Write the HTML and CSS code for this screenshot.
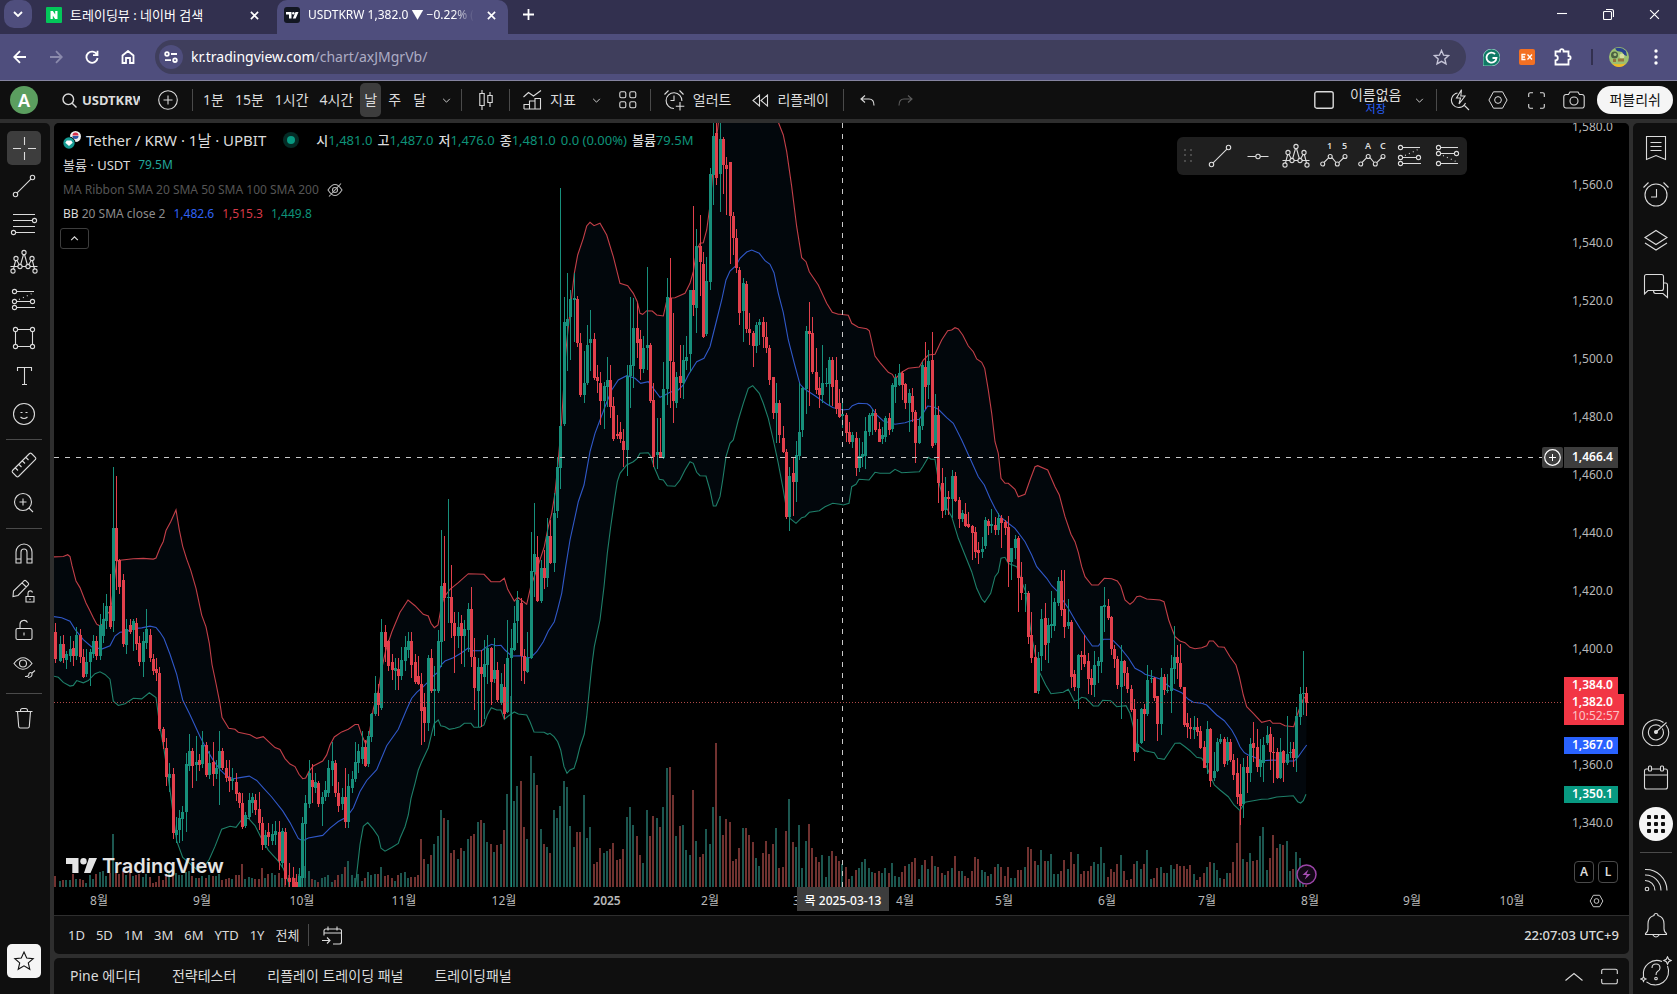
FILE: index.html
```
<!DOCTYPE html>
<html lang="ko">
<head>
<meta charset="utf-8">
<title>USDTKRW 1,382.0 ▼ −0.22%</title>
<link rel="stylesheet" href="styles.css">
</head>
<body>
<svg class="sprite" aria-hidden="true">
  <symbol id="i-trend" viewBox="0 0 28 28"><path d="M7.1 20.9 20.9 7.1"/><circle cx="5.5" cy="22.5" r="2.2"/><circle cx="22.5" cy="5.5" r="2.2"/></symbol>
  <symbol id="i-xabcd" viewBox="0 0 28 28"><path d="M.5 18.5H8M12 18.5h4M20 18.5h7.5M3.5 21 5.600 12.500M6.800 12.500 9.300 16.500M10.700 16.500 13.500 6.500M14.500 6.500 17.300 16.500M18.700 16.500 21.200 12.500M22.400 12.500 24.500 21"/><circle cx="3" cy="23" r="2.100"/><circle cx="6" cy="10.500" r="2.100"/><circle cx="10" cy="18.500" r="2.100"/><circle cx="14" cy="4.500" r="2.100"/><circle cx="18" cy="18.500" r="2.100"/><circle cx="22" cy="10.500" r="2.100"/><circle cx="25" cy="23" r="2.100"/></symbol>
  <symbol id="i-forecast" viewBox="0 0 28 28"><path d="M6.700 5.500H24M6.700 15.500h13.600M6.700 21.500H25"/><path d="M9 13.500 23 7" stroke-dasharray="1 3.300"/><circle cx="4.500" cy="5.500" r="2.100"/><circle cx="4.500" cy="15.500" r="2.100"/><circle cx="22.500" cy="15.500" r="2.100"/><circle cx="4.500" cy="21.500" r="2.100"/></symbol>
  <symbol id="i-forecast-down" viewBox="0 0 28 28"><path d="M6.700 5.500H24M6.700 11.500h13.600M6.700 21.500H24"/><path d="M9 13.500 23 20" stroke-dasharray="1 3.300"/><circle cx="4.500" cy="5.500" r="2.100"/><circle cx="4.500" cy="11.500" r="2.100"/><circle cx="22.500" cy="11.500" r="2.100"/><circle cx="4.500" cy="21.500" r="2.100"/></symbol>
  <symbol id="i-wave" viewBox="0 0 28 28"><path d="m4 20.500 4.500-4.700M12 15.700l4 4.800M18.700 20.700l5.300-5.200"/><circle cx="2.700" cy="22" r="2"/><circle cx="10.200" cy="14.500" r="2"/><circle cx="17.300" cy="22" r="2"/><circle cx="25" cy="14.500" r="2"/></symbol>
  <symbol id="i-chev" viewBox="0 0 10 6"><path d="m1 1 4 4 4-4"/></symbol>
  <symbol id="i-x" viewBox="0 0 10 10"><path d="m1 1 8 8M9 1 1 9"/></symbol>
  <symbol id="i-star" viewBox="0 0 22 22"><path d="m11 2 2.700 6 6.500.6-4.900 4.300 1.500 6.400L11 15.900l-5.800 3.400 1.500-6.400L1.800 8.600l6.500-.6z"/></symbol>
  <symbol id="i-hex" viewBox="0 0 22 22"><path d="M6 2h10l5 9-5 9H6L1 11z"/><circle cx="11" cy="11" r="3.700"/></symbol>
</svg>

<div class="window">
  <header class="tabs">
    <button class="tab-search" aria-label="탭 검색"><svg class="ic bold" width="10" height="6"><use href="#i-chev"/></svg></button>
    <div class="tab">
      <svg width="16" height="16" viewBox="0 0 16 16"><rect width="16" height="16" rx="1" fill="#03c75a"/><path d="M4.500 4h2.400l2.300 3.500V4h2.300v8H9.100L6.800 8.500V12H4.500z" fill="#fff"/></svg>
      <span class="tab-title ko">트레이딩뷰 : 네이버 검색</span>
      <button class="tab-close" aria-label="탭 닫기"><svg class="ic bold" width="9" height="9"><use href="#i-x"/></svg></button>
    </div>
    <div class="tab active">
      <svg width="16" height="16" viewBox="0 0 16 16"><rect width="16" height="16" rx="3" fill="#131722"/><path d="M2 5h5.500v6.500H5V7.500H2zM11.500 5H14.500l-2.800 6.500H8.800z" fill="#fff"/><circle cx="9.300" cy="6.200" r="1.200" fill="#fff"/></svg>
      <span class="tab-title fade">USDTKRW 1,382.0 ▼ −0.22% (</span>
      <button class="tab-close" aria-label="탭 닫기"><svg class="ic bold" width="9" height="9"><use href="#i-x"/></svg></button>
    </div>
    <button class="tab-new" aria-label="새 탭"><svg class="ic bold" width="11" height="11" viewBox="0 0 11 11"><path d="M5.500 0v11M0 5.500h11"/></svg></button>
    <div class="win-controls">
      <button aria-label="최소화"><svg class="ic" width="10" height="10" viewBox="0 0 10 10"><path d="M0 4.500h10"/></svg></button>
      <button aria-label="이전 크기로"><svg class="ic" width="11" height="11" viewBox="0 0 11 11"><rect x=".5" y="2.500" width="8" height="8" rx="1"/><path d="M3 .5h5.500a2 2 0 0 1 2 2V8"/></svg></button>
      <button aria-label="닫기"><svg class="ic" width="11" height="11"><use href="#i-x"/></svg></button>
    </div>
  </header>

  <nav class="omnibar">
    <button class="nav-btn" aria-label="뒤로"><svg class="ic bold" width="14" height="14" viewBox="0 0 14 14"><path d="M13 7H1.500M7 1.200 1.200 7 7 12.800"/></svg></button>
    <button class="nav-btn dim" aria-label="앞으로"><svg class="ic bold" width="14" height="14" viewBox="0 0 14 14"><path d="M1 7h11.500M7 1.200 12.800 7 7 12.800"/></svg></button>
    <button class="nav-btn" aria-label="새로고침"><svg class="ic bold" width="14" height="14" viewBox="0 0 14 14"><path d="M12 4.500A5.600 5.600 0 1 0 12.600 8M12.500.800v4.400H8"/></svg></button>
    <button class="nav-btn" aria-label="홈"><svg class="ic bold" width="14" height="14" viewBox="0 0 14 14"><path d="M1.500 13V5.500L7 1l5.500 4.500V13H9V8H5v5z"/></svg></button>
    <div class="omnibox">
      <button class="site-info" aria-label="사이트 정보"><svg class="ic bold" width="14" height="12" viewBox="0 0 14 12"><circle cx="3" cy="3" r="1.800"/><path d="M7 3h6M1 9.200h6"/><circle cx="11" cy="9.200" r="1.800"/></svg></button>
      <a class="url" href="#"><b>kr.tradingview.com</b>/chart/axJMgrVb/</a>
      <button class="bookmark" aria-label="북마크"><svg class="ic bold" width="17" height="17"><use href="#i-star"/></svg></button>
    </div>
    <div class="exts">
      <button aria-label="Grammarly"><svg width="17" height="17" viewBox="0 0 17 17"><path d="M0 8.500a8.500 8.500 0 1 1 8.500 8.500H0z" fill="#0f7a66" stroke="#cfe" stroke-width=".6"/><path d="M12 5a5 5 0 1 0 1.500 4H9.500" fill="none" stroke="#fff" stroke-width="1.800"/></svg></button>
      <button aria-label="EX"><svg width="16" height="16" viewBox="0 0 16 16"><rect width="16" height="16" rx="2" fill="#f37023"/><path d="M6.500 5.500H3v5h3.500M3 8h3M8.500 5.500l4.500 5M13 5.500l-4.500 5" fill="none" stroke="#fff" stroke-width="1.300"/></svg></button>
      <button aria-label="확장 프로그램"><svg class="ic bold" width="18" height="18" viewBox="0 0 18 18"><path d="M1.500 3.500H6V3a1.800 1.800 0 0 1 3.600 0v.5h4.900V8h.3a1.800 1.800 0 0 1 0 3.600h-.3v4.900h-13v-4.200a2.300 2.300 0 0 0 0-4.600z"/></svg></button>
      <i class="ext-sep"></i>
      <button class="profile" aria-label="프로필"><svg width="20" height="20" viewBox="0 0 20 20"><circle cx="10" cy="10" r="10" fill="#9cc070"/><path d="M6 1.500q6-2.500 11 2.500l1 5-3-1-2-3-5-1z" fill="#29418f"/><circle cx="5.500" cy="8" r="3.500" fill="#4a6140"/><circle cx="6" cy="7.500" r="1.500" fill="#a9c37f"/><circle cx="13" cy="9" r="2.500" fill="#d4de9e"/><path d="M4 12h3v3H4zM9 11.500h6v3H9z" fill="#96743d"/><path d="M3 16.500q7 1.500 14 0-3 3.500-7 3.500t-7-3.500" fill="#efb827"/></svg></button>
      <button aria-label="메뉴"><svg width="4" height="16" viewBox="0 0 4 16" fill="#fff"><circle cx="2" cy="2" r="1.700"/><circle cx="2" cy="8" r="1.700"/><circle cx="2" cy="14" r="1.700"/></svg></button>
    </div>
  </nav>

  <div class="topbar">
    <button class="avatar">A</button>
    <button class="symbol"><svg class="ic mid" width="15" height="15" viewBox="0 0 15 15"><circle cx="6.300" cy="6.300" r="5.300"/><path d="m10.200 10.200 4.300 4.300"/></svg><span>USDTKRW</span></button>
    <button class="add" aria-label="심볼 비교"><svg class="ic" width="20" height="20" viewBox="0 0 20 20"><circle cx="10" cy="10" r="9.300"/><path d="M10 5.500v9M5.500 10h9"/></svg></button>
    <i class="vsep"></i>
    <div class="intervals">
      <button class="tight">1분</button><button class="tight">15분</button><button class="tight">1시간</button><button class="tight">4시간</button><button class="on">날</button><button>주</button><button>달</button>
      <button class="more" aria-label="간격 메뉴"><svg class="ic" width="9" height="5"><use href="#i-chev"/></svg></button>
    </div>
    <i class="vsep"></i>
    <button class="sq" aria-label="캔들"><svg class="ic" width="14" height="20" viewBox="0 0 14 20"><path d="M3 0v3.500M3 15.500V20M11 2v3.500M11 12.500V17"/><path d="M.8 3.500h4.400v12H.8zM8.800 5.500h4.400v7H8.800z"/></svg></button>
    <i class="vsep"></i>
    <button class="labelled"><svg class="ic" width="19" height="20" viewBox="0 0 19 20"><path d="m.5 7 5-4.500 5 3.500L18 .5"/><path d="M1 19v-4.500h5.500V19M6.500 19v-8h5.500v8M12 19V8.500h5.500V19zM1 19h16"/></svg>지표</button>
    <button class="chev" aria-label="즐겨찾기 지표"><svg class="ic" width="9" height="5"><use href="#i-chev"/></svg></button>
    <button class="sq slim" aria-label="템플릿"><svg class="ic" width="18" height="18" viewBox="0 0 18 18"><rect x=".8" y=".8" width="6" height="6" rx="1.500"/><rect x="10.800" y=".8" width="6" height="6" rx="1.500"/><rect x=".8" y="10.800" width="6" height="6" rx="1.500"/><rect x="10.800" y="10.800" width="6" height="6" rx="1.500"/></svg></button>
    <i class="vsep"></i>
    <button class="labelled"><svg class="ic" width="21" height="21" viewBox="0 0 21 21"><path d="M17.900 11A7.900 7.900 0 1 0 10 18.500M10 5.500v5H6.500M.5 4.500l4-4M15.500.5l4 4M16 12v8.500M11.800 16.300h8.500"/></svg>얼러트</button>
    <button class="labelled"><svg class="ic" width="17" height="13" viewBox="0 0 17 13"><path d="M7.500 1v11L1 6.500zM15.500 1v11L9 6.500z"/></svg>리플레이</button>
    <i class="vsep"></i>
    <button class="sq" aria-label="실행 취소"><svg class="ic" width="15" height="11" viewBox="0 0 15 11"><path d="M5 .5 1 4l4 3.500M1 4h8q5 0 5 6.500"/></svg></button>
    <button class="sq dim" aria-label="다시 실행"><svg class="ic" width="15" height="11" viewBox="0 0 15 11"><path d="M10 .5 14 4l-4 3.500M14 4H6q-5 0-5 6.500"/></svg></button>
    <div class="top-right">
      <button aria-label="레이아웃"><svg class="ic mid" width="20" height="18" viewBox="0 0 20 18"><rect x=".8" y=".8" width="18.400" height="16.400" rx="2"/></svg></button>
      <button class="layout-name"><span>이름없음</span><small>저장</small></button>
      <button aria-label="레이아웃 메뉴"><svg class="ic" width="9" height="5"><use href="#i-chev"/></svg></button>
      <i class="vsep"></i>
      <button class="tool" aria-label="빠른 검색"><svg class="ic" width="20" height="22" viewBox="0 0 20 22"><path d="M7.500 4A7.300 7.300 0 1 0 15.500 14M14 16l5 5M11.500.8 6.500 9h4l-1.500 6L15 7h-4.200z"/></svg></button>
      <button class="tool" aria-label="설정"><svg class="ic" width="22" height="20"><use href="#i-hex"/></svg></button>
      <button class="tool" aria-label="전체 화면"><svg class="ic" width="17" height="17" viewBox="0 0 17 17"><path d="M.7 5V2.200A1.500 1.500 0 0 1 2.200.7H5M12 .7h2.800a1.500 1.500 0 0 1 1.500 1.500V5M16.300 12v2.800a1.500 1.500 0 0 1-1.500 1.500H12M5 16.300H2.200a1.500 1.500 0 0 1-1.500-1.500V12"/></svg></button>
      <button class="tool" aria-label="스냅샷"><svg class="ic" width="22" height="18" viewBox="0 0 22 18"><path d="M7 1h8l1.500 2.500H19a2.200 2.200 0 0 1 2.200 2.200v9A2.200 2.200 0 0 1 19 17H3a2.200 2.200 0 0 1-2.200-2.200v-9A2.200 2.200 0 0 1 3 3.500h2.500z"/><circle cx="11" cy="10" r="4"/></svg></button>
      <button class="publish">퍼블리쉬</button>
    </div>
  </div>

  <div class="body">
    <aside class="tools">
      <button class="tl on" aria-label="십자선"><svg class="ic" width="28" height="28" viewBox="0 0 28 28"><path d="M14.500 3v8M14.500 18v8M3 14.500h8M18 14.500h8"/></svg></button>
      <button class="tl" aria-label="추세선"><svg class="ic" width="28" height="28"><use href="#i-trend"/></svg></button>
      <button class="tl" aria-label="피보나치"><svg class="ic" width="28" height="28" viewBox="0 0 28 28"><path d="M3 4.500h22M3 10.500h19.300M3 16.500h22M5.700 22.500H25"/><circle cx="24.500" cy="10.500" r="2.100"/><circle cx="3.500" cy="22.500" r="2.100"/></svg></button>
      <button class="tl" aria-label="패턴"><svg class="ic" width="28" height="28"><use href="#i-xabcd"/></svg></button>
      <button class="tl" aria-label="예측"><svg class="ic" width="28" height="28"><use href="#i-forecast"/></svg></button>
      <button class="tl" aria-label="도형"><svg class="ic" width="28" height="28" viewBox="0 0 28 28"><path d="M7.700 5.500h12.600M7.700 22.500h12.600M5.500 7.700v12.600M22.500 7.700v12.600"/><circle cx="5.500" cy="5.500" r="2.100"/><circle cx="22.500" cy="5.500" r="2.100"/><circle cx="5.500" cy="22.500" r="2.100"/><circle cx="22.500" cy="22.500" r="2.100"/></svg></button>
      <button class="tl" aria-label="텍스트"><svg class="ic" width="28" height="28" viewBox="0 0 28 28"><path d="M7.500 9V5.500h14V9M14.500 5.500v17M12 22.500h5"/></svg></button>
      <button class="tl" aria-label="아이콘"><svg class="ic" width="28" height="28" viewBox="0 0 28 28"><circle cx="14" cy="14" r="10.500"/><path d="M10.500 17q3.500 3 7 0M10.500 12.500h2M15.500 12.500h2"/></svg></button>
      <hr>
      <button class="tl" aria-label="자"><svg class="ic" width="28" height="28" viewBox="0 0 28 28"><path d="m2.500 19.500 17-17q1-.7 2 0l4 4q.7 1 0 2l-17 17q-1 .7-2 0l-4-4q-.7-1 0-2zM5.500 17l2.500 2.500M9 13.500l2.500 2.500M12.500 10l2.500 2.500M16 6.500 18.500 9"/></svg></button>
      <button class="tl" aria-label="확대"><svg class="ic" width="28" height="28" viewBox="0 0 28 28"><circle cx="13" cy="13" r="8.500"/><path d="m19 19 4 4M13 9.500v7M9.500 13h7"/></svg></button>
      <hr>
      <button class="tl" aria-label="자석"><svg class="ic" width="28" height="28" viewBox="0 0 28 28"><path d="M6 23V12a8 8 0 0 1 16 0v11h-5V12a3 3 0 0 0-6 0v11zM6 19h5M17 19h5"/></svg></button>
      <button class="tl" aria-label="그리기 유지"><svg class="ic" width="28" height="28" viewBox="0 0 28 28"><path d="M3 18.500 3.500 13 14 2.800q1-.8 2 0L18.300 5q.8 1 0 2L8 17.500zM12 4.800 16.300 9M16 18.500h8v5.500h-8zM18 18.500V15a2.300 2.300 0 0 1 4.500-.5M20 20.500v1.500"/></svg></button>
      <button class="tl" aria-label="잠금"><svg class="ic" width="28" height="28" viewBox="0 0 28 28"><rect x="6" y="12.500" width="16" height="11" rx="1.500"/><path d="M10 12.500V8.500a4 4 0 0 1 7.500-2M14 16.500v3"/></svg></button>
      <button class="tl" aria-label="숨기기"><svg class="ic" width="28" height="28" viewBox="0 0 28 28"><path d="M4 9.500q9-11.500 18 0-9 11.500-18 0z"/><circle cx="13" cy="9.500" r="3.500"/><path d="M15 22.500q4 .5 4-3 2-2 3 .2.500 3.500-4 3.800M22 19l3-2.500"/></svg></button>
      <hr>
      <button class="tl" aria-label="삭제"><svg class="ic" width="28" height="28" viewBox="0 0 28 28"><path d="M5.500 6.500h17M7.500 6.500l1.200 15q.2 1.500 1.500 1.500h7.600q1.300 0 1.500-1.500l1.200-15M10.500 6.500v-1q0-2 2-2h3q2 0 2 2v1"/></svg></button>
      <button class="fav" aria-label="즐겨찾기"><svg class="ic dark" width="22" height="22"><use href="#i-star"/></svg></button>
    </aside>

    <main class="center">
      <section class="chart-card">
        <div class="chart">
          <div class="plot">
            <svg class="plot-svg" id="plot"></svg>
            <div class="legend">
              <div class="row title">
                <svg width="18" height="18" viewBox="0 0 18 18"><circle cx="12.500" cy="5.500" r="5.500" fill="#eee"/><path d="M9.500 4.500a3 3 0 0 1 6 0z" fill="#d5304b"/><path d="M9.500 5a3 3 0 0 0 6 0z" fill="#2d55a5"/><circle cx="6" cy="12" r="6.500" fill="#000"/><circle cx="6" cy="12" r="5.700" fill="#159a92"/><path d="M3.800 9.500h4.400l1.500 2.200L6 15l-3.700-3.300z" fill="#fff"/></svg>
                <span class="name">Tether / KRW · 1날 · UPBIT</span>
                <i class="status"></i>
                <span class="ohlc">시<em>1,481.0</em></span><span class="ohlc">고<em>1,487.0</em></span><span class="ohlc">저<em>1,476.0</em></span><span class="ohlc">종<em>1,481.0</em></span><span class="ohlc"><em>0.0 (0.00%)</em></span><span class="ohlc">볼륨<em>79.5M</em></span>
              </div>
              <div class="row vol"><span>볼륨 · USDT</span><em class="teal">79.5M</em></div>
              <div class="row muted"><span>MA Ribbon SMA 20 SMA 50 SMA 100 SMA 200</span><svg class="ic" width="16" height="14" viewBox="0 0 16 14"><path d="M1 7q7-11 14 0-7 11-14 0zM2 13.500 14 .5"/><circle cx="8" cy="7" r="2.500"/></svg></div>
              <div class="row bb"><span>BB <u>20 SMA close 2</u></span><em class="blue">1,482.6</em><em class="red">1,515.3</em><em class="green">1,449.8</em></div>
              <button class="collapse" aria-label="접기"><svg class="ic mid flip" width="9" height="5"><use href="#i-chev"/></svg></button>
            </div>
            <div class="float-tools">
              <svg class="grip" width="9" height="14" viewBox="0 0 9 14"><path d="M0 0h2v2H0zM6 0h2v2H6zM0 5h2v2H0zM6 5h2v2H6zM0 11h2v2H0zM6 11h2v2H6z"/></svg>
              <button aria-label="추세선"><svg class="ic" width="28" height="28"><use href="#i-trend"/></svg></button>
              <button aria-label="가로선"><svg class="ic" width="28" height="28" viewBox="0 0 28 28"><path d="M3.500 14.500h8.300M16.200 14.500h8.300"/><circle cx="14" cy="14.500" r="2.200"/></svg></button>
              <button aria-label="XABCD 패턴"><svg class="ic" width="28" height="28"><use href="#i-xabcd"/></svg></button>
              <button class="wave" aria-label="엘리엇 임펄스"><svg class="ic" width="28" height="28"><use href="#i-wave"/></svg><span>1</span><span>5</span></button>
              <button class="wave" aria-label="엘리엇 조정"><svg class="ic" width="28" height="28"><use href="#i-wave"/></svg><span>A</span><span>C</span></button>
              <button aria-label="롱 포지션"><svg class="ic" width="28" height="28"><use href="#i-forecast"/></svg></button>
              <button aria-label="숏 포지션"><svg class="ic" width="28" height="28"><use href="#i-forecast-down"/></svg></button>
            </div>
            <div class="brand"><svg width="31" height="16" viewBox="0 0 31 16" fill="#e4e4e4"><path d="M0 0h12.500v15H6.300V6H0zM23 0h8l-6.500 15H18z"/><circle cx="17.500" cy="3.200" r="3.200"/></svg><span>TradingView</span></div>
          </div>
          <div class="price-scale">
            <svg class="scale-svg" id="prices"></svg>
            <div class="scale-btns"><button>A</button><button>L</button></div>
          </div>
          <div class="time-scale"><svg class="scale-svg" id="times"></svg></div>
          <button class="scale-cfg" aria-label="축 설정"><svg class="ic mid" width="15" height="14"><use href="#i-hex"/></svg></button>
        </div>
        <div class="ranges">
          <button>1D</button><button>5D</button><button>1M</button><button>3M</button><button>6M</button><button>YTD</button><button>1Y</button><button>전체</button>
          <i class="vsep"></i>
          <button aria-label="날짜로 이동"><svg class="ic" width="20" height="19" viewBox="0 0 20 19"><path d="M2 9.500V5q0-2 2-2h13.500q2 0 2 2v11q0 2-2 2H11M2 7h17.500M6 .5v4M15 .5v4M0 14.500h7.500M5 11.500l3 3-3 3"/></svg></button>
          <button class="clock">22:07:03 UTC+9</button>
        </div>
      </section>
      <section class="bottom-tabs">
        <button>Pine 에디터</button><button>전략테스터</button><button>리플레이 트레이딩 패널</button><button>트레이딩패널</button>
        <div class="panel-ctl">
          <button aria-label="패널 열기"><svg class="ic" width="18" height="9" viewBox="0 0 18 9"><path d="m.5 8.500 8.500-7 8.500 7"/></svg></button>
          <button aria-label="패널 최대화"><svg class="ic" width="17" height="17" viewBox="0 0 17 17"><path d="M.7 6V3A1.800 1.800 0 0 1 2.500 1.200h12A1.800 1.800 0 0 1 16.300 3v3M16.300 11v3a1.800 1.800 0 0 1-1.800 1.800h-12A1.800 1.800 0 0 1 .7 14v-3"/></svg></button>
        </div>
      </section>
    </main>

    <aside class="widgets">
      <button aria-label="관심종목"><svg class="ic" width="28" height="28" viewBox="0 0 28 28"><path d="M4.500 2.500h19v23l-9.500-4-9.500 4zM8.500 8.500h11M8.500 12.500h11M8.500 16.500h11"/></svg></button>
      <button aria-label="얼러트"><svg class="ic" width="28" height="28" viewBox="0 0 28 28"><circle cx="14" cy="15" r="11"/><path d="M14.500 9v8H9M1.500 7.500l5-5M21.500 2.500l5 5"/></svg></button>
      <button aria-label="오브젝트 트리"><svg class="ic" width="28" height="28" viewBox="0 0 28 28"><path d="m14 4.500 11 7-11 7-11-7zM3 17l11 7 11-7"/></svg></button>
      <button aria-label="채팅"><svg class="ic" width="28" height="28" viewBox="0 0 28 28"><path d="M2.500 22V4.500q0-2 2-2h15q2 0 2 2v12q0 2-2 2H6zM21.500 11h2q2 0 2 2v12.500l-4.500-4h-7.500q-2 0-2-3"/></svg></button>
      <button class="push" aria-label="스크리너"><svg class="ic" width="28" height="28" viewBox="0 0 28 28"><path d="M21.500 4.500A13 13 0 1 0 24 7M18.500 8.500A7.500 7.500 0 1 0 20.300 10.500M14 14 24.500 4.500"/><circle cx="14" cy="14" r="1.500" fill="#dbdbdb"/></svg></button>
      <button aria-label="캘린더"><svg class="ic" width="28" height="28" viewBox="0 0 28 28"><path d="M6.500 5h-2q-2 0-2 2v16q0 2 2 2h19q2 0 2-2V7q0-2-2-2h-2M9.500 5h9M2.500 11h23"/><rect x="6.500" y="2" width="3" height="5" rx="1"/><rect x="18.500" y="2" width="3" height="5" rx="1"/></svg></button>
      <button aria-label="프로덕트"><svg width="34" height="34" viewBox="0 0 34 34"><circle cx="17" cy="17" r="17" fill="#f5f5f5"/><g fill="#0f0f0f"><rect x="8" y="8" width="4" height="4" rx="1"/><rect x="15" y="8" width="4" height="4" rx="1"/><rect x="22" y="8" width="4" height="4" rx="1"/><rect x="8" y="15" width="4" height="4" rx="1"/><rect x="15" y="15" width="4" height="4" rx="1"/><rect x="22" y="15" width="4" height="4" rx="1"/><rect x="8" y="22" width="4" height="4" rx="1"/><rect x="15" y="22" width="4" height="4" rx="1"/><rect x="22" y="22" width="4" height="4" rx="1"/></g></svg></button>
      <hr>
      <button aria-label="스트림"><svg class="ic" width="28" height="28" viewBox="0 0 28 28"><circle cx="5" cy="23" r="1.800"/><path d="M3 14.500a10 10 0 0 1 10 10M3 9a15.500 15.500 0 0 1 16 15.500M3 3.500a21 21 0 0 1 22 21"/></svg></button>
      <button aria-label="알림"><svg class="ic" width="28" height="28" viewBox="0 0 28 28"><path d="M3.500 21.500q2.500-1.500 2.500-5V12q0-7 6-8.500a2 2 0 0 1 4 0q6 1.500 6 8.500v4.500q0 3.500 2.500 5v1h-21zM10.500 22.500q3.500 5 7 0"/></svg></button>
      <button aria-label="도움말"><svg class="ic" width="32" height="32" viewBox="0 0 32 32"><path d="M22 5.500A13.500 13.500 0 0 0 3.500 20M6.500 25.800A13.500 13.500 0 0 0 27.500 10M12 12q0-4 4-4t4 4q0 2.200-2.500 3.500-1.500.8-1.500 3.500"/><circle cx="16" cy="22.500" r="1.300"/><path d="m27.500.8 1.200 2.500 2.500 1.200-2.500 1.200-1.200 2.500-1.200-2.500L23.800 4.500l2.500-1.200zM3.500 20.500l.8 1.700 1.700.8-1.700.8-.8 1.700-.8-1.700L1 23l1.700-.8z"/></svg></button>
    </aside>
  </div>
</div>
<script src="chart.js"></script>
</body>
</html>
```

FILE: styles.css
```
* { box-sizing: border-box; }
body { margin: 0; background: #2e2e2e; color: #dbdbdb; font: 13px/16px "Noto Sans", "Noto Sans CJK KR", sans-serif; }
button { display: flex; align-items: center; justify-content: center; flex: none; margin: 0; padding: 0; border: 0; background: none; color: inherit; font: inherit; white-space: nowrap; }
i, em, u { font-style: normal; text-decoration: none; }
a { color: inherit; text-decoration: none; }
svg { display: block; flex: none; }
.sprite { position: absolute; width: 0; height: 0; }
.ic { fill: none; stroke: currentColor; stroke-width: 1.1; }
.ic.mid { stroke-width: 1.4; }
.ic.bold { stroke-width: 1.8; }
.ic.dark { color: #0f0f0f; }
.flip { transform: rotate(180deg); }
.window { display: flex; flex-direction: column; min-height: 100vh; }

.tabs { display: flex; height: 34px; padding-left: 4px; background: #32304f; color: #fff; font-size: 12px; }
.tab-search { width: 28px; height: 28px; border-radius: 10px; background: #4f4e7d; }
.tab { display: flex; align-items: center; gap: 8px; width: 231px; padding: 0 4px 4px 14px; }
.tab.active { padding-left: 7px; padding-right: 12px; margin-left: 14px; background: #4f4e7d; border-radius: 10px 10px 0 0; }
.tab-title { flex: 1; min-width: 0; overflow: hidden; white-space: nowrap; }
.tab-title.ko { font-size: 13px; }
.tab-title.fade { mask-image: linear-gradient(90deg, #000 85%, transparent 97%); }
.tab-new { width: 40px; height: 28px; }
.win-controls { display: flex; height: 28px; margin-left: auto; }
.win-controls button { width: 46px; }

.omnibar { display: flex; align-items: center; height: 47px; padding-left: 2px; background: #4f4e7d; border-bottom: 1px solid #8584a0; color: #fff; }
.nav-btn { width: 36px; height: 36px; }
.nav-btn.dim { color: #8b8aac; }
.omnibox { display: flex; flex: 1; align-items: center; height: 34px; margin-left: 9px; padding: 0 16px 0 4px; border-radius: 17px; background: #3f3e5c; }
.site-info { width: 24px; height: 24px; border-radius: 12px; background: #4f4e7d; }
.url { flex: 1; margin-left: 8px; color: #adacc4; font-size: 14px; }
.url b { color: #fff; font-weight: 400; }
.bookmark { color: #c6c5d8; }
.exts { display: flex; align-items: center; height: 34px; padding-right: 19px; margin-left: 17px; gap: 19px; }
.ext-sep { width: 2px; height: 16px; background: #32304f; }
.profile { margin: 0 6px 0 -3px; }

.vsep { flex: none; width: 1px; height: 22px; background: #4a4a4a; }
.topbar { display: flex; align-items: center; height: 38px; padding: 0 4px 0 10px; background: #0f0f0f; font-size: 14px; }
.avatar { width: 28px; height: 28px; border-radius: 14px; background: #5b9e5f; color: #fff; font-size: 18px; font-weight: 600; }
.symbol { gap: 5px; margin-left: 24px; font-size: 13px; font-weight: 700; }
.symbol span { width: 58px; overflow: hidden; text-align: left; }
.add { margin: 0 14px 0 18px; }
.intervals { display: flex; align-items: center; padding: 0 4px; }
.intervals button { height: 34px; padding: 0 6px; }
.intervals .tight { padding-right: 5px; }
.intervals .on { margin: 0 1px 0 2px; padding: 0 4px; border-radius: 5px; background: #3d3d3d; }
.intervals .more { padding-left: 10px; }
.sq { width: 47px; }
.sq.slim { width: 43px; }
.sq.dim { width: 30px; color: #5d5d5d; }
.labelled { gap: 8px; margin: 0 11px 0 13px; }
.labelled + .labelled { margin: 0 14px 0 10px; }
.chev { width: 20px; }
.top-right { display: flex; align-items: center; margin-left: auto; }
.layout-name { flex-direction: column; margin: 0 14px 0 16px; line-height: 16px; }
.layout-name small { color: #2962ff; font-size: 11px; line-height: 11px; }
.top-right .vsep { margin: 0 4px 0 12px; }
.tool { width: 38px; }
.publish { height: 28px; margin-left: 4px; padding: 0 12px; border-radius: 14px; background: #f5f5f5; color: #0f0f0f; }

.body { display: flex; flex: 1; gap: 4px; padding-top: 4px; }
.tools { display: flex; flex-direction: column; align-items: center; gap: 4px; width: 50px; padding: 8px 2px 16px 0; border-radius: 0 5px 0 0; background: #0f0f0f; }
.tl { width: 34px; height: 34px; border-radius: 5px; }
.tl.on { background: #3d3d3d; }
.tools hr { width: 36px; margin: 4px 0; border: 0; border-top: 1px solid #4a4a4a; }
.fav { width: 34px; height: 34px; margin-top: auto; border-radius: 5px; background: #f5f5f5; }

.center { display: flex; flex: 1; flex-direction: column; gap: 4px; min-width: 0; }
.chart-card { display: flex; flex: 1; flex-direction: column; overflow: hidden; border-radius: 5px; background: #0f0f0f; }
.chart { display: grid; flex: 1; grid-template: minmax(0, 1fr) 28px / minmax(0, 1fr) 66px; background: #000; }
.plot, .price-scale, .time-scale { position: relative; overflow: hidden; }
.plot-svg, .scale-svg { position: absolute; top: 0; left: 0; width: 100%; height: 100%; }
.scale-svg, .plot-svg { overflow: hidden; font-size: 12px; }
.price-scale { display: flex; align-items: flex-end; justify-content: flex-end; }
.scale-btns { display: flex; gap: 4px; padding: 0 11px 4px 0; position: relative; }
.scale-btns button { width: 20px; height: 22px; border: 1px solid #4a4a4a; border-radius: 4px; font-size: 12px; font-weight: 600; }
.scale-cfg { align-self: center; }

.legend { position: absolute; top: 5px; left: 9px; display: flex; flex-direction: column; font-size: 12px; }
.row { display: flex; align-items: center; gap: 8px; height: 24px; white-space: nowrap; }
.title { height: 24px; gap: 5px; }
.name { margin-right: 16px; font-size: 15px; }
.status { width: 8px; height: 8px; margin-right: 16px; border-radius: 4px; background: #089981; box-shadow: 0 0 0 4px #042b25; }
.ohlc { font-size: 13px; font-weight: 500; }
.ohlc em, .green { color: #0e9379; font-weight: 400; }
.vol { height: 26px; font-size: 13px; }
.vol .teal { font-size: 12px; }
.teal { color: #22a69a; }
.muted { color: #555; gap: 8px; }
.muted .ic { color: #b5b5b5; }
.bb u { color: #8c8c8c; }
.blue { color: #2f62f3; }
.red { color: #d63a48; }
.collapse { width: 29px; height: 21px; margin: 2px 0 0 -3px; border: 1px solid #3d3d3d; border-radius: 3px; }
.float-tools { position: absolute; top: 14px; right: 96px; display: flex; align-items: center; gap: 10px; height: 38px; padding: 0 5px 0 7px; border-radius: 6px; background: #1f1f1f; }
.grip { margin-right: 3px; fill: #4a4a4a; }
.wave { position: relative; }
.wave span { position: absolute; top: 0; left: 7px; font-size: 9px; line-height: 8px; font-weight: 600; }
.wave span + span { left: 22px; }
.brand { position: absolute; left: 12px; bottom: 8px; display: flex; align-items: center; gap: 5px; color: #e4e4e4; font: 600 20px/26px Inter, sans-serif; }

.ranges { display: flex; align-items: center; height: 39px; padding: 0 10px 0 14px; border-top: 1px solid #2e2e2e; gap: 11px; }
.ranges .vsep { margin: 0 2px 0 -2px; }
.clock { margin-left: auto; font-weight: 500; }
.bottom-tabs { display: flex; align-items: center; gap: 31px; height: 36px; padding: 0 11px 0 16px; border-radius: 5px 5px 0 0; background: #0f0f0f; font-size: 14px; }
.panel-ctl { display: flex; gap: 18px; margin-left: auto; }

.widgets { display: flex; flex-direction: column; align-items: center; gap: 18px; width: 44px; padding: 11px 0 8px 2px; border-radius: 5px 0 0 0; background: #0f0f0f; }
.widgets button { height: 28px; }
.widgets .push { margin-top: auto; }
.widgets hr { width: 32px; margin: -4px 0 -5px; border: 0; border-top: 1px solid #4a4a4a; }
```

FILE: chart.js
```
// Each block lists bars as: direction+x, high, body top, body bottom, low, volume.
// Coordinates are in sub-pixel units; left/top/sx/sy map them to the plot.
const blocks = [
{left:0, top:420, sx:3, sy:2.732, vs:1, bars:`
r167 555 580 652 665 11|g180 590 612 658 662 6|r190 588 612 650 665 7|g199 630 640 655 680 7|g210 590 625 645 660 7|r220 605 622 645 672 13|g230 565 587 645 655 8|r241 570 587 648 665 8|r251 625 648 703 705 7|g260 625 660 695 703 4|g271 625 635 660 728 12|g281 587 603 640 650 8|r290 590 603 645 657 13|g301 530 560 645 655 15|g310 500 545 590 610 16|g320 475 508 550 570 11|r332 420 508 565 570 14|g341 128 295 548 578 53|r350 153 295 385 465 14|r359 380 383 455 475 13|r370 420 437 612 620 16|g380 545 570 615 640 12|r391 545 560 578 585 14|g401 545 548 575 632 11|r410 540 555 612 628 12|r419 590 610 660 672 13|g431 580 605 660 703 10|g440 515 572 610 625 13|r450 570 587 650 660 10|r460 640 652 685 697 4|r470 650 680 692 712 5|r479 675 690 843 850 11|r491 840 843 880 900 7|r500 870 895 975 1000 12|g509 937 968 978 1015 15|r521 950 967 1128 1145 16|g530 1085 1120 1133 1155 14|g539 1065 1088 1120 1155 12|g548 1055 1070 1090 1150 12|g560 910 940 1072 1125 15|g569 858 905 945 960 16|r578 895 905 945 1005 11|g590 862 935 943 985 9|r599 912 930 943 960 9|g608 850 887 940 950 11|r619 880 887 970 975 9|g629 905 937 970 980 12|r640 880 935 968 1000 11|g650 930 950 968 980 11|g659 850 903 952 1053 13|r668 895 903 952 955 7|r680 930 950 978 990 8|r689 930 975 985 1015 9|g698 950 980 985 1010 8|r710 965 990 1022 1040 12|r719 1015 1018 1045 1060 12|r728 1020 1045 1112 1118 23|g737 1070 1080 1110 1115 8|g749 1020 1038 1085 1090 10|g758 1020 1030 1045 1075 9|r767 1022 1038 1065 1080 8|r779 1015 1062 1100 1120 8|r788 1085 1100 1160 1175 19|g797 1120 1135 1160 1170 9|r806 1100 1125 1140 1165 13|g818 1105 1130 1150 1160 14|g827 1095 1122 1135 1160 12|r839 1095 1125 1205 1230 14|g848 1115 1122 1210 1225 9|r857 1115 1125 1255 1270 16|r868 1210 1250 1262 1285 12|r880 1220 1250 1285 1295 10|r889 1240 1262 1285 1300 9|g899 1225 1245 1280 1290 13|g908 1085 1100 1250 1275 19|g917 1025 1045 1103 1250 21|g927 930 965 1048 1060 16|r936 940 983 1003 1045 8|g945 965 990 1005 1020 7|r956 985 992 1048 1058 5|g968 1015 1030 1048 1108 9|g977 985 1012 1030 1040 10|g986 930 950 1018 1030 12|g998 880 932 955 1000 5|r1007 930 938 1020 1030 7|r1016 990 1020 1055 1070 12|g1028 1005 1030 1050 1065 13|r1037 950 1030 1098 1115 20|g1046 967 1000 1098 1115 26|g1058 960 980 1005 1020 12|g1067 880 935 980 990 9|g1076 885 905 938 965 13|g1088 850 893 925 940 6|r1097 875 893 945 948 9|g1106 850 862 940 948 15|g1115 800 802 865 880 12|g1127 700 745 803 808 13|r1136 720 745 778 810 13|g1145 545 578 788 792 20|r1157 560 580 620 660 11|r1166 600 605 672 685 12|r1178 640 660 683 710 9|g1187 650 678 685 738 6|r1196 650 680 700 738 12|g1205 620 655 700 710 14|g1217 590 620 658 685 15|g1226 580 605 628 650 9|r1235 580 605 668 705 10|r1247 640 660 715 720 10|r1256 645 700 720 725 12`},
{left:400, top:560, sx:3, sy:3, vs:3, bars:`
r65 338 372 452 555 143|r74 398 440 488 545 83|g85 285 293 490 513 70|r94 267 293 392 398 97|g103 318 388 393 528 130|g115 210 243 392 398 152|g124 -90 78 245 320 230|r133 -72 70 115 242 206|g145 -183 110 115 188 200|r154 15 110 190 235 103|r163 155 190 228 338 110|g176 155 200 228 265 83|r184 165 188 228 313 116|g193 180 207 228 320 107|g206 128 147 210 275 143|r215 80 147 290 320 152|r224 235 290 383 450 158|g236 295 322 392 500 194|r245 270 320 343 500 200|g253 240 312 350 478 191|g262 225 265 315 373 134|r275 260 265 367 435 128|g283 235 330 357 368 104|r292 305 330 420 425 125|g304 340 373 430 435 128|r313 312 380 462 478 170|g322 180 293 455 458 278|g334 207 265 295 980 573|g344 138 188 270 272 257|g353 93 120 182 250 302|r365 115 128 288 362 317|r374 268 288 332 372 179|g383 215 295 335 340 143|g394 -85 33 295 297 392`},
{left:400, top:120, sx:3, sy:3, vs:3, bars:`
g404 1150 1302 1355 1430 341|r413 1248 1310 1443 1445 305|g424 1320 1343 1443 1448 173|r433 1290 1343 1373 1408 128|g442 1195 1248 1373 1400 119|r452 1200 1248 1328 1333 101|g463 1120 1180 1330 1355 230|g473 1010 1042 1172 1195 206|g481 205 918 1045 1108 242|g494 530 607 912 918 317|g503 460 598 617 752 299|g512 510 537 590 720 182|g523 460 535 541 665 119|r533 528 537 668 680 164|r542 640 668 825 830 164|g553 692 790 825 848 275|g562 615 675 790 795 146|g572 570 657 670 752 179|r583 640 657 773 780 68|r592 735 770 782 820 74|r602 755 790 842 915 116|g613 785 798 843 927 101|g622 710 780 800 860 107|r631 735 780 860 893 113|r640 830 858 957 963 131|r652 885 943 948 958 80|r661 905 937 957 970 83|r670 928 962 990 1040 113|g683 735 768 990 1067 209|g692 530 735 768 865 239|g701 535 625 737 805 185|r712 548 625 668 715 152|r721 630 657 747 780 95|g730 648 685 747 760 71|g742 440 675 685 750 230|r751 668 675 843 850 152|r760 790 840 1012 1040 212|g772 893 995 1005 1048 206|r781 893 995 1012 1015 179|g790 727 808 1013 1018 239|g803 475 530 808 855 356|r812 415 535 723 865 359|r821 580 725 843 908 275|g830 755 770 850 865 152|r841 675 768 790 835 182|g850 675 720 790 838 185|g860 648 710 722 750 110|g871 510 510 703 755 95|r880 258 510 555 587 290|g889 328 378 563 638 137|r901 285 378 425 528 89|r910 397 432 650 655 98|g920 412 483 642 648 173|g931 145 163 485 510 128|g941 -10 48 165 255 239|r950 -10 40 173 195 431|g962 -10 57 163 275 212|r970 50 57 135 222 155|r979 112 135 147 285 203|r991 127 127 288 432 194|r1000 277 287 355 405 77|r1009 327 355 443 460 83|r1018 440 450 580 615 116|g1031 475 490 572 665 176|r1040 483 492 627 640 176|r1049 580 627 640 675 155|r1061 632 640 678 742 134|g1070 605 615 678 700 86|g1079 597 607 615 675 62|r1090 590 607 650 685 101|r1100 607 650 685 700 137|r1109 675 685 780 795 98|r1121 770 772 880 898 128|g1130 788 850 878 970 176|r1139 840 850 945 970 56|r1151 918 953 997 1000 59|r1160 988 995 1190 1197 167|g1169 1040 1067 1190 1232 263|r1181 1012 1060 1085 1187 134|g1190 963 1005 1087 1145 119|g1199 790 937 1007 1020 185|g1208 800 805 930 950 56|g1219 617 633 808 883 137|r1228 547 633 641 857 188|r1237 590 640 757 762 116|r1249 685 755 810 822 89|r1258 770 805 825 865 74|g1267 675 790 825 850 95|g1279 745 788 792 800 29|g1288 712 720 792 858 92|r1298 712 720 800 857 107|r1309 712 780 868 883 92|r1318 808 850 890 893 77`},
{left:780, top:120, sx:3, sy:3, vs:3, bars:`
g188 835 883 888 925 68|r200 878 885 938 965 59|r208 907 935 967 972 23|g217 935 945 967 985 32|r229 937 953 1043 1067 50|g238 955 1008 1043 1057 56|g247 965 1003 1010 1040 74|g257 890 933 1007 1048 83|g268 878 885 935 947 56|g277 868 880 888 945 44|r287 868 880 930 935 41|r299 907 928 965 967 47|g308 920 945 957 973 41|g317 887 895 950 965 56|r329 878 895 930 945 41|g338 790 795 928 935 71|g347 763 775 800 850 32|g359 732 758 795 797 29|r368 752 758 795 840 44|r377 790 793 850 867 64|g389 808 820 850 935 68|r398 805 828 877 905 74|r407 870 875 968 1030 86|g419 895 918 970 973 23|g428 725 735 918 930 65|r437 667 740 800 868 80|g446 690 723 795 838 53|r458 635 720 977 983 92|g467 823 885 970 975 62|r476 857 885 1090 1150 59|r488 1043 1090 1172 1195 41|g497 1070 1130 1170 1185 35|r506 1112 1130 1138 1185 47|g518 1050 1068 1138 1195 56|r527 1055 1068 1143 1147 92|r537 1130 1140 1197 1225 47|g548 1170 1178 1197 1205 47|r557 1150 1183 1217 1220 32|r566 1177 1213 1220 1223 26|r578 1215 1217 1240 1320 47|r587 1220 1237 1295 1313 89|r596 1265 1290 1298 1333 83|g607 1250 1288 1297 1313 50|g616 1190 1200 1278 1288 44|r626 1198 1202 1217 1245 32|g635 1168 1213 1218 1240 38|r646 1190 1215 1230 1245 59|g656 1180 1193 1230 1245 68|r664 1185 1195 1208 1283 59|r676 1200 1207 1225 1245 32|r686 1188 1220 1325 1400 59|g694 1285 1285 1325 1380 26|g706 1245 1257 1285 1317 26|r715 1248 1253 1373 1475 50|r725 1325 1370 1420 1440 50|g737 1392 1418 1423 1477 59`},
{left:880, top:560, sx:3, sy:3, vs:3, bars:`
r446 93 98 230 253 119|r455 155 225 293 308 113|r467 255 292 398 400 77|g475 275 295 393 402 65|g485 147 177 288 333 110|r497 128 175 255 300 77|g505 175 195 248 308 77|g515 93 193 198 235 98|g524 113 127 197 213 38|g536 52 63 128 137 38|r545 30 63 150 167 47|r554 30 147 200 233 80|g566 117 187 197 207 53|r575 180 187 350 385 104|r584 330 342 380 393 68|g596 283 285 383 447 98|r605 273 285 291 330 38|r614 225 285 313 322 47|r626 280 303 357 403 47|r635 328 355 375 405 62|g644 273 315 375 410 74|g656 290 303 318 370 68|g665 137 138 307 340 119|g674 82 135 142 215 71|r686 117 138 175 180 29|r695 167 170 267 285 53|r704 255 267 298 323 44|r713 288 297 375 388 68|g725 255 302 380 477 95|r734 300 303 340 377 47|r743 320 338 388 400 20|r755 375 388 450 457 23|r764 417 447 575 603 68|g773 478 553 577 580 77|g785 445 447 550 553 53|r794 433 447 462 542 68|g803 315 360 462 467 110|g815 330 353 357 370 23|r824 350 353 413 423 26|r833 407 407 492 543 56|g845 325 350 492 525 59|r854 343 350 390 405 41|g863 343 390 393 400 41|g875 285 325 392 458 65|g884 198 290 327 372 53|r893 255 290 310 357 68|r902 252 310 382 387 62|r914 380 382 495 502 62|r923 460 490 502 533 53|r932 475 500 508 537 65|g944 467 500 510 537 38|r953 475 500 515 528 20|r962 497 513 563 568 29|r974 543 560 623 625 41|g983 483 507 610 642 59|r992 505 507 662 682 74|g1004 577 632 653 663 71|g1013 535 545 632 635 50|g1022 522 537 547 552 26|r1034 530 537 612 620 23|g1043 530 545 602 615 41|r1052 537 545 600 607 41|r1061 583 600 645 660 74|r1073 593 640 710 733 131|r1082 612 703 737 795 227|g1091 593 622 733 773 83|r1103 587 620 640 700 74|g1112 535 553 640 665 101|r1121 485 550 563 605 77|r1133 507 562 620 635 80|g1142 537 600 622 650 152|g1151 530 555 610 667 179|g1163 498 525 550 555 50|r1172 500 522 577 630 86|r1181 530 575 578 670 155|r1193 565 577 655 657 116|g1202 535 575 655 657 128|r1211 570 573 610 667 125|g1223 468 582 610 615 137|g1232 545 575 580 595 47|r1241 547 567 593 620 53|g1250 440 467 593 637 104|g1262 382 402 470 495 86|g1271 273 400 403 465 50|r1280 382 400 428 467 5`}
];

// Bollinger lines: one string per block, same units as above.
const bands = {
upper: [
"162,374 190,373 203,368 210,373 216,398 228,440 240,458 258,500 268,518 280,540 290,558 300,563 310,555 322,530 332,520 343,440 350,385 360,383 400,379 430,378 460,380 468,377 480,350 490,332 498,302 512,278 528,246 538,300 548,345 560,380 572,410 588,460 605,533 618,565 628,610 636,668 648,720 660,775 666,812 686,842 705,845 715,853 750,860 770,870 790,865 805,878 825,895 840,900 855,925 870,940 885,947 897,968 908,980 917,978 927,960 940,945 968,932 980,915 990,888 1003,866 1025,852 1045,845 1065,832 1075,832 1085,860 1097,885 1107,860 1120,790 1135,740 1145,680 1157,630 1175,580 1200,525",
"8,145 24,120 45,137 70,163 85,168 93,190 103,203 114,195 124,140 133,110 150,88 175,68 205,41 252,43 273,65 300,65 313,55 323,88 343,123 353,112 380,133",
"392,1400 413,1340 433,1280 445,1220 455,1180 465,1120 475,1020 485,900 497,700 505,620 512,560 523,460 533,405 550,355 560,318 570,307 582,317 600,310 620,345 640,410 660,490 683,497 700,520 712,545 720,580 728,583 740,572 757,573 770,585 790,588 802,535 825,533 855,520 870,490 880,455 890,390 900,370 910,368 920,330 931,250 941,120 950,50 960,-30 1125,-30 1136,10 1150,45 1160,95 1175,200 1190,320 1205,413 1218,425 1228,455 1255,495 1280,550 1297,577 1315,583",
"180,583 205,586 215,610 235,622 260,626 268,632 285,708 300,728 325,757 337,763 345,777 365,757 385,745 418,741 430,720 445,705 465,703 485,660 503,632 515,630 525,623 535,627 548,645 565,678 580,695 590,717 605,727 614,745 625,810 635,880 645,965 655,1000 663,1075 675,1090 685,1090 705,1108 715,1130 735,1123 750,1080 765,1040 773,1037 803,1050 825,1100 838,1125 855,1190 873,1243 885,1265 895,1297 905,1340 915,1370 935,1395 955,1395 973,1375 995,1376 1012,1383 1022,1398 1035,1440 1050,1453 1060,1445 1070,1430 1080,1428 1100,1437 1140,1440 1152,1445",
"866,180 875,205 885,230 900,243 915,248 930,262 945,266 965,263 980,257 988,243 1000,243 1015,260 1033,262 1050,290 1068,315 1078,350 1090,405 1100,440 1120,460 1145,487 1170,481 1178,490 1200,490 1215,497 1241,500 1250,470 1262,435 1271,415 1280,408"],
basis: [
"162,537 185,540 210,550 225,572 250,600 275,620 305,626 330,617 345,590 360,580 380,578 400,570 425,568 450,563 468,567 480,580 492,597 510,640 530,695 548,765 570,805 600,865 620,900 640,930 660,955 680,973 700,980 720,977 748,973 770,985 790,1005 815,1030 848,1068 870,1100 895,1143 908,1150 925,1142 968,1135 990,1115 1015,1097 1040,1085 1060,1060 1080,1015 1100,985 1130,955 1160,890 1195,845 1220,790 1235,760",
"50,397 70,380 85,365 100,348 113,337 125,313 135,303 160,293 185,278 205,264 220,272 245,272 258,262 275,253 288,257 303,256 315,270 335,288 360,287 375,292 392,293 410,275 430,245 445,213 463,185",
"473,1468 485,1420 497,1340 510,1260 522,1205 535,1145 552,1095 562,1040 570,995 585,940 600,900 615,860 635,810 655,780 680,767 705,775 722,790 745,785 760,805 780,832 795,825 810,817 835,810 850,795 865,765 890,725 912,715 930,680 950,600 965,540 978,480 990,453 1007,438 1020,415 1040,396 1055,390 1078,400 1095,422 1110,433 1122,458 1135,520 1150,578 1165,660 1183,730 1200,793 1215,808 1245,827 1280,852 1300,863 1320,867",
"188,870 207,868 217,857 235,850 262,851 270,857 290,885 310,903 330,908 345,913 375,908 400,900 418,898 428,882 443,858 460,860 475,868 500,893 520,910 545,960 568,1010 595,1070 613,1095 630,1135 645,1165 660,1190 685,1210 705,1225 735,1265 755,1305 770,1340 800,1375 815,1397",
"533,95 548,120 565,145 585,180 600,205 620,235 637,258 655,258 670,238 690,238 700,242 720,262 745,293 765,325 785,335 795,343 820,350 840,357 855,370 875,385 905,398 925,418 940,427 965,430 980,435 1010,465 1033,482 1055,510 1068,533 1080,560 1093,578 1105,585 1120,590 1145,602 1180,600 1220,603 1243,603 1255,590 1267,573 1280,555"],
lower: [
"162,700 175,703 190,717 210,727 220,725 230,712 250,718 265,712 285,693 300,688 315,695 330,708 340,768 355,780 375,775 400,760 425,762 448,745 468,758 480,840 492,900 500,950 510,1010 520,1080 530,1150 548,1195 590,1228 612,1222 628,1200 645,1165 665,1118 690,1110 708,1113 725,1092 745,1088 765,1108 785,1145 805,1175 835,1205 850,1225 865,1262 875,1310 1062,1310 1070,1240 1080,1160 1090,1110 1103,1100 1120,1118 1135,1138 1143,1170 1155,1178 1175,1168 1195,1157",
"0,835 15,800 25,765 33,715 45,670 55,630 65,605 85,563 95,520 103,490 115,480 122,497 135,500 148,508 165,505 180,500 193,490 213,490 222,502 240,502 252,495 262,465 274,443 290,450 303,450 313,478 325,468 343,456 355,462 380,465 390,485 402,516 432,517 443,523 450,520 462,530 473,545 482,570 492,620 501,640 510,630 522,625 530,600 540,560 553,522 560,470 567,400 575,320 583,260",
"600,1500 612,1400 622,1300 632,1220 645,1130 652,1085 660,1060 680,1035 700,1025 712,1015 720,1000 745,998 753,1010 762,1040 778,1078 790,1080 802,1097 825,1099 840,1080 855,1050 870,1025 880,1030 890,1057 900,1067 918,1068 930,1110 940,1158 948,1158 960,1130 968,1080 978,1010 990,970 1000,960 1015,900 1030,850 1045,805 1058,797 1078,820 1090,850 1105,895 1120,960 1135,1030 1150,1110 1160,1170 1170,1195 1188,1210 1205,1193 1215,1190 1228,1177 1258,1172 1275,1160 1298,1150 1320,1153",
"190,1155 207,1150 215,1100 228,1093 237,1078 267,1080 285,1057 300,1060 330,1060 345,1048 365,1058 418,1055 428,1040 445,1012 453,1018 465,1018 475,1080 488,1130 500,1165 515,1190 535,1255 555,1305 575,1355 590,1405 605,1437 614,1447 632,1420 645,1370 655,1357 663,1315 675,1312 685,1330 710,1340 725,1385 737,1415",
"446,170 455,230 467,290 475,330 485,350 497,375 513,401 550,397 565,388 583,423 595,420 605,412 618,415 640,438 655,438 668,421 692,422 710,440 738,437 750,460 760,500 768,550 780,560 795,572 823,578 833,595 853,598 868,575 885,550 900,549 915,560 930,572 950,592 965,595 980,620 992,650 1003,675 1020,690 1045,710 1062,735 1080,752 1095,727 1120,722 1145,718 1165,717 1190,711 1240,707 1253,725 1262,729 1270,722 1278,703"]
};

const X0 = 54, Y0 = 123, BASE = 764;
const mapX = (b, x) => x / b.sx + b.left - X0;
const mapY = (b, y) => y / b.sy + b.top - Y0;

function linePoints(name) {
  return bands[name].flatMap((s, i) => s.split(" ").map(p => {
    const [x, y] = p.split(",").map(Number);
    return mapX(blocks[i], x).toFixed(1) + "," + mapY(blocks[i], y).toFixed(1);
  }));
}

function renderPlot() {
  let volume = "", candles = "";
  for (const b of blocks) {
    for (const row of b.bars.trim().split("|")) {
      const up = row[0] === "g";
      const [x, h, t, bo, l, v] = row.slice(1).split(" ").map(Number);
      const cx = Math.floor(mapX(b, x));
      const [yh, yt, yb, yl] = [h, t, bo, l].map(n => Math.round(mapY(b, n)));
      const vh = Math.round(v / b.vs);
      volume += `<rect x="${cx - 1}" y="${BASE - vh}" width="2" height="${vh}" fill="${up ? "#1c5750" : "#713230"}"/>`;
      candles += `<path fill="${up ? "#178f7b" : "#e2404c"}" d="M${cx} ${yh}h1V${yl}h-1zM${cx - 1} ${yt}h3V${Math.max(yb, yt + 1)}h-3z"/>`;
    }
  }
  const u = linePoints("upper"), m = linePoints("basis"), l = linePoints("lower");
  const poly = (pts, c) => `<polyline points="${pts.join(" ")}" fill="none" stroke="${c}" stroke-width="1.1"/>`;
  document.getElementById("plot").innerHTML =
    `<polygon points="${u.concat([...l].reverse()).join(" ")}" fill="#02070c"/>` +
    volume + poly(u, "#c23f48") + poly(m, "#3058c8") + poly(l, "#1e7f69") + candles +
    `<path d="M0 579.500H1509" stroke="#b04a48" stroke-dasharray="1 2"/>
     <path d="M0 334.500H1488M788.500 0V764" stroke="#c9c9c9" stroke-dasharray="5 6"/>
     <circle cx="1252.500" cy="751.500" r="9.500" fill="#120816" stroke="#9c45a8" stroke-width="1.500"/>
     <path d="m1254.500 746.500-6 5.500h4.200l-2 4.500 6-5.500h-4.200z" fill="#a84fb5"/>
     <rect x="1488" y="324" width="21" height="21" rx="2" fill="#3d3d3d"/>
     <circle cx="1498.500" cy="334.500" r="7.800" fill="none" stroke="#fff" stroke-width="1.200"/>
     <path d="M1498.500 331v7M1495 334.500h7" stroke="#fff"/>`;
}

function renderPrices() {
  let out = "";
  for (let p = 1340, y = 700; p <= 1580; p += 20, y -= 58) {
    if (p === 1380) continue;
    out += `<text x="9" y="${y + 4}" fill="#b8b8b8">1,${p - 1000}.0</text>`;
  }
  const tag = (y, h, w, c, t) => `<rect x="1" y="${y}" width="${w}" height="${h}" fill="${c}"/><text x="9" y="${Math.floor(h / 2) + y + 4}" fill="#fff" font-weight="600">${t}</text>`;
  out += tag(324, 21, 54, "#3d3d3d", "1,466.4") + tag(554, 17, 54, "#f23645", "1,384.0") +
    `<rect x="1" y="571" width="60" height="31" fill="#f23645"/><text x="9" y="583" fill="#fff" font-weight="600">1,382.0</text><text x="9" y="597" fill="#fbc3c8">10:52:57</text>` +
    tag(614, 17, 54, "#2962ff", "1,367.0") + tag(663, 17, 54, "#089981", "1,350.1");
  document.getElementById("prices").innerHTML = out;
}

function renderTimes() {
  const marks = [[45, "8월"], [148, "9월"], [248, "10월"], [350, "11월"], [450, "12월"], [553, "2025"], [656, "2월"], [748, "3월"], [851, "4월"], [950, "5월"], [1053, "6월"], [1153, "7월"], [1256, "8월"], [1358, "9월"], [1458, "10월"]];
  document.getElementById("times").innerHTML =
    marks.map(([x, t]) => `<text x="${x}" y="18" text-anchor="middle" fill="#b8b8b8" font-weight="${t === "2025" ? 600 : 400}">${t}</text>`).join("") +
    `<rect x="743" y="0" width="92" height="24" fill="#3d3d3d"/><text x="789" y="18" text-anchor="middle" fill="#fff" font-weight="500">목 2025-03-13</text>`;
}

renderPlot();
renderPrices();
renderTimes();
```
